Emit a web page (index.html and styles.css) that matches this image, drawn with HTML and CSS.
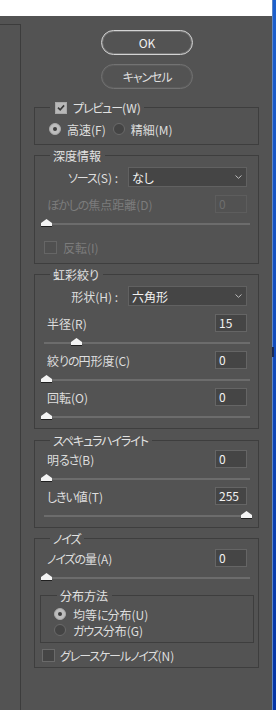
FILE: index.html
```html
<!DOCTYPE html>
<html lang="ja">
<head>
<meta charset="utf-8">
<title>レンズぼかし</title>
<link rel="stylesheet" href="styles.css">
</head>
<body>
<div class="app">
  <div class="titlebar"></div>
  <div class="workspace">
    <div class="preview-pane"></div>
    <div class="panel">
      <button class="btn btn-primary" type="button">OK</button>
      <button class="btn btn-cancel" type="button"><span class="kana">キャンセル</span></button>

      <fieldset class="group group-preview">
        <legend class="legend legend-check">
          <span class="check checked"><svg width="11" height="11" viewBox="0 0 11 11"><path d="M2.2 5.6 L4.6 8 L8.9 3.2" fill="none" stroke="#3a3a3a" stroke-width="1.8"/></svg></span>
          <span class="check-text"><span class="kana">プレビュー</span>(W)</span>
        </legend>
        <div class="radio-line">
          <span class="radio on"></span><span class="radio-text">高速(F)</span>
          <span class="radio off second"></span><span class="radio-text">精細(M)</span>
        </div>
      </fieldset>

      <fieldset class="group group-depth">
        <legend class="legend">深度情報</legend>
        <div class="select-row">
          <span class="select-label"><span class="kana">ソース</span>(S) :</span>
          <div class="select"><span>なし</span><svg class="chev" width="7" height="4" viewBox="0 0 7 4"><path d="M0.5 0.5 L3.5 3.3 L6.5 0.5" fill="none" stroke="#bdbdbd" stroke-width="1"/></svg></div>
        </div>
        <div class="value-row first">
          <span class="value-label disabled"><span class="kana">ぼかしの</span>焦点距離(D)</span>
          <div class="field disabled">0</div>
        </div>
        <div class="slider"><div class="track"></div><svg class="thumb" style="--v:0" width="11" height="8" viewBox="0 0 11 8"><path d="M5.5 0 L11 4 L11 8 L0 8 L0 4 Z" fill="#f4f4f4"/><rect x="0" y="7" width="11" height="1" fill="#1f1f1f"/></svg></div>
        <div class="check-row invert">
          <span class="check disabled-box"></span>
          <span class="check-label disabled">反転(I)</span>
        </div>
      </fieldset>

      <fieldset class="group group-iris">
        <legend class="legend">虹彩絞り</legend>
        <div class="select-row">
          <span class="select-label">形状(H) :</span>
          <div class="select"><span>六角形</span><svg class="chev" width="7" height="4" viewBox="0 0 7 4"><path d="M0.5 0.5 L3.5 3.3 L6.5 0.5" fill="none" stroke="#bdbdbd" stroke-width="1"/></svg></div>
        </div>
        <div class="value-row first">
          <span class="value-label">半径(R)</span>
          <div class="field">15</div>
        </div>
        <div class="slider"><div class="track"></div><svg class="thumb" style="--v:0.15" width="11" height="8" viewBox="0 0 11 8"><path d="M5.5 0 L11 4 L11 8 L0 8 L0 4 Z" fill="#f4f4f4"/><rect x="0" y="7" width="11" height="1" fill="#1f1f1f"/></svg></div>
        <div class="value-row">
          <span class="value-label">絞<span class="kana">りの</span>円形度(C)</span>
          <div class="field">0</div>
        </div>
        <div class="slider"><div class="track"></div><svg class="thumb" style="--v:0" width="11" height="8" viewBox="0 0 11 8"><path d="M5.5 0 L11 4 L11 8 L0 8 L0 4 Z" fill="#f4f4f4"/><rect x="0" y="7" width="11" height="1" fill="#1f1f1f"/></svg></div>
        <div class="value-row">
          <span class="value-label">回転(O)</span>
          <div class="field">0</div>
        </div>
        <div class="slider"><div class="track"></div><svg class="thumb" style="--v:0" width="11" height="8" viewBox="0 0 11 8"><path d="M5.5 0 L11 4 L11 8 L0 8 L0 4 Z" fill="#f4f4f4"/><rect x="0" y="7" width="11" height="1" fill="#1f1f1f"/></svg></div>
      </fieldset>

      <fieldset class="group group-specular">
        <legend class="legend"><span class="kana">スペキュラハイライト</span></legend>
        <div class="value-row">
          <span class="value-label">明<span class="kana">るさ</span>(B)</span>
          <div class="field">0</div>
        </div>
        <div class="slider"><div class="track"></div><svg class="thumb" style="--v:0" width="11" height="8" viewBox="0 0 11 8"><path d="M5.5 0 L11 4 L11 8 L0 8 L0 4 Z" fill="#f4f4f4"/><rect x="0" y="7" width="11" height="1" fill="#1f1f1f"/></svg></div>
        <div class="value-row">
          <span class="value-label"><span class="kana">しきい</span>値(T)</span>
          <div class="field">255</div>
        </div>
        <div class="slider"><div class="track"></div><svg class="thumb" style="--v:1" width="11" height="8" viewBox="0 0 11 8"><path d="M5.5 0 L11 4 L11 8 L0 8 L0 4 Z" fill="#f4f4f4"/><rect x="0" y="7" width="11" height="1" fill="#1f1f1f"/></svg></div>
      </fieldset>

      <fieldset class="group group-noise">
        <legend class="legend"><span class="kana">ノイズ</span></legend>
        <div class="value-row noise-amount">
          <span class="value-label"><span class="kana">ノイズの</span>量(A)</span>
          <div class="field">0</div>
        </div>
        <div class="slider"><div class="track"></div><svg class="thumb" style="--v:0" width="11" height="8" viewBox="0 0 11 8"><path d="M5.5 0 L11 4 L11 8 L0 8 L0 4 Z" fill="#f4f4f4"/><rect x="0" y="7" width="11" height="1" fill="#1f1f1f"/></svg></div>
        <fieldset class="group group-dist">
          <legend class="legend legend-inner">分布方法</legend>
          <div class="dist-row first"><span class="radio on"></span><span class="radio-text">均等<span class="kana">に</span>分布(U)</span></div>
          <div class="dist-row"><span class="radio off"></span><span class="radio-text"><span class="kana">ガウス</span>分布(G)</span></div>
        </fieldset>
        <div class="check-row gray">
          <span class="check"></span>
          <span class="check-label"><span class="kana">グレースケールノイズ</span>(N)</span>
        </div>
      </fieldset>
    </div>
  </div>
</div>
<div class="edge"><span class="edge-notch"></span></div>
</body>
</html>
```

FILE: styles.css
```css
* {
  box-sizing: border-box;
}

html,
body {
  margin: 0;
  padding: 0;
}

body {
  width: 276px;
  height: 710px;
  overflow: hidden;
  display: flex;
  background: #535353;
  color: #dedede;
  font-family: "Noto Sans CJK JP", "Noto Sans", sans-serif;
  font-size: 12px;
  font-feature-settings: "palt";
}

.kana {
  letter-spacing: -1.1px;
}

.app {
  width: 272px;
  height: 710px;
  display: flex;
  flex-direction: column;
}

.titlebar {
  height: 16px;
  flex: none;
  background: #ffffff;
}

.workspace {
  flex: 1;
  display: flex;
  background: #535353;
}

.preview-pane {
  width: 21px;
  flex: none;
  margin-top: 8px;
  border-top: 1px solid #3c3c3c;
  border-right: 1px solid #3c3c3c;
}

.panel {
  flex: 1;
  display: flex;
  flex-direction: column;
  padding: 14px 13px 0;
}

.edge {
  position: relative;
  width: 4px;
  height: 710px;
  flex: none;
  border-left: 1px solid #5f86c4;
  background: linear-gradient(#1d60cd, #1450c0 40%, #0535a5);
}

.edge-notch {
  position: absolute;
  left: -1px;
  top: 347px;
  width: 2px;
  height: 10px;
  background: #1b2a52;
}

/* buttons */
.btn {
  display: flex;
  align-items: center;
  justify-content: center;
  width: 92px;
  height: 25px;
  margin: 0 0 0 67px;
  padding: 0 0 1px;
  border-radius: 13px;
  background: transparent;
  font-family: "Noto Sans CJK JP", "Noto Sans", sans-serif;
  font-size: 12px;
  font-feature-settings: "palt";
  line-height: 15px;
  cursor: default;
}

.btn-primary {
  border: 1px solid #d4d4d4;
  box-shadow: inset 0 0 0 1px rgba(200, 200, 200, 0.3);
  color: #f0f0f0;
}

.btn-cancel {
  margin-top: 9px;
  border: 1px solid #727272;
  box-shadow: inset 0 0 0 1px rgba(114, 114, 114, 0.3);
  color: #dedede;
}

/* groups */
.group {
  margin: 0;
  min-width: 0;
  border: 1px solid #3e3e3e;
  padding: 0 4px 5px 5px;
}

.legend {
  margin-left: 10px;
  padding: 0 4px 0 3px;
  height: 15px;
  line-height: 15px;
  color: #e2e2e2;
}

.legend-check {
  display: flex;
  align-items: center;
  padding: 0 3px 0 5px;
}

.check-text {
  margin-left: 6px;
}

.group-preview {
  margin-top: 11px;
  padding: 5px 4px 6px 5px;
}

.group-depth {
  margin-top: 3px;
  padding-bottom: 9px;
}

.group-iris {
  margin-top: 3px;
}

.group-specular {
  margin-top: 4px;
}

.group-noise {
  margin-top: 3px;
}

/* radios */
.radio-line {
  display: flex;
  align-items: center;
  height: 18px;
  margin-left: 9px;
}

.radio {
  flex: none;
  width: 12px;
  height: 12px;
  border-radius: 50%;
}

.radio.on {
  display: flex;
  align-items: center;
  justify-content: center;
  background: #bdbdbd;
  border: 1px solid #a9a9a9;
}

.radio.on::after {
  content: "";
  width: 4px;
  height: 4px;
  border-radius: 50%;
  background: #3d3d3d;
}

.radio.off {
  background: #444444;
  border: 1px solid #6a6a6a;
}

.radio.second {
  margin-left: 7px;
}

.radio-text {
  margin-left: 6px;
}

/* checkboxes */
.check {
  flex: none;
  display: flex;
  align-items: center;
  justify-content: center;
  width: 13px;
  height: 13px;
  border: 1px solid #6a6a6a;
  background: #454545;
}

.check.checked {
  width: 12px;
  height: 12px;
  border: 1px solid #a8a8a8;
  background: #b8b8b8;
}

.check.disabled-box {
  border-color: #666666;
  background: #505050;
}

.check-row {
  display: flex;
  align-items: center;
  height: 13px;
}

.check-row.invert {
  margin: 11px 0 0 4px;
}

.check-row.invert .check-label {
  margin-left: 6px;
}

.check-row.gray {
  margin: 6px 0 0 2px;
}

.check-row.gray .check-label {
  margin-left: 5px;
}

/* select rows */
.select-row {
  display: flex;
  align-items: center;
  height: 20px;
  margin-top: 4px;
}

.select-label {
  width: 88px;
  flex: none;
  padding-right: 10px;
  text-align: right;
}

.select {
  width: 119px;
  height: 20px;
  flex: none;
  display: flex;
  align-items: center;
  justify-content: space-between;
  padding: 0 4px 0 3px;
  background: #454545;
  border: 1px solid #616161;
  color: #f2f2f2;
}

.chev {
  display: block;
}

/* value rows */
.value-row {
  display: flex;
  align-items: center;
  height: 18px;
  margin-top: 2px;
}

.value-row.first {
  margin-top: 8px;
}

.value-row.noise-amount {
  margin-top: 3px;
}

.value-label {
  flex: 1;
  margin-left: 7px;
}

.field {
  width: 32px;
  height: 18px;
  flex: none;
  margin-right: 7px;
  padding-left: 3px;
  line-height: 16px;
  background: #454545;
  border: 1px solid #656565;
  color: #f2f2f2;
}

.disabled {
  color: #7c7c7c;
}

.field.disabled {
  background: #525252;
  border-color: #5d5d5d;
  color: #6e6e6e;
}

/* sliders */
.slider {
  position: relative;
  height: 12px;
  margin: 5px 4px 0;
  padding-top: 5px;
}

.track {
  height: 2px;
  background: #6c6c6c;
}

.thumb {
  position: absolute;
  top: 1px;
  left: calc(var(--v) * 200px - 3px);
  display: block;
}

/* inner distribution group */
.group-dist {
  margin-top: 4px;
  padding: 3px 0 4px 5px;
}

.legend-inner {
  margin-left: 11px;
}

.dist-row {
  display: flex;
  align-items: center;
  height: 16px;
  margin-left: 8px;
}

.dist-row .radio-text {
  margin-left: 7px;
}
```
